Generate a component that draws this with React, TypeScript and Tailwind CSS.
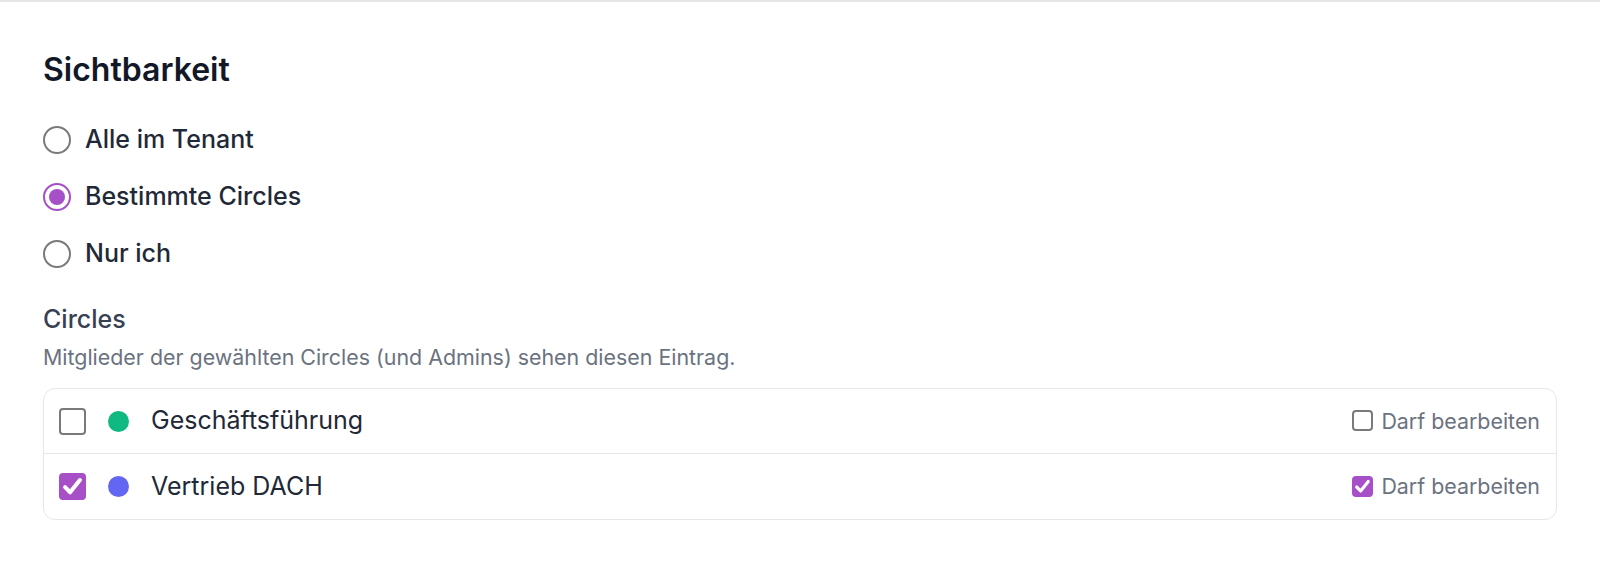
import React, { useState } from "react";

type Visibility = "tenant" | "circles" | "me";

interface Circle {
  id: string;
  name: string;
  color: string;
}

const CIRCLES: Circle[] = [
  { id: "gf", name: "Geschäftsführung", color: "bg-[#10b981]" },
  { id: "vd", name: "Vertrieb DACH", color: "bg-[#6366f1]" },
];

const OPTIONS: { value: Visibility; label: string }[] = [
  { value: "tenant", label: "Alle im Tenant" },
  { value: "circles", label: "Bestimmte Circles" },
  { value: "me", label: "Nur ich" },
];

function Radio({ checked }: { checked: boolean }) {
  return (
    <span
      className={`flex h-[28px] w-[28px] shrink-0 items-center justify-center rounded-full border-[2px] ${
        checked ? "border-[#a64fc6]" : "border-[#7a7a7a]"
      }`}
    >
      {checked && <span className="h-[16px] w-[16px] rounded-full bg-[#a64fc6]" />}
    </span>
  );
}

function Check({ checked, size }: { checked: boolean; size: "lg" | "sm" }) {
  const box = size === "lg" ? "h-[27px] w-[27px] rounded-[4px]" : "h-[21px] w-[21px] rounded-[4px]";
  return (
    <span
      className={`flex shrink-0 items-center justify-center ${box} ${
        checked ? "bg-[#a64fc6]" : "border-[2px] border-[#7a7a7a] bg-white"
      }`}
    >
      {checked && (
        <svg viewBox="0 0 16 16" className="h-full w-full" fill="none">
          <path
            d="M3.6 8.4 L6.6 11.4 L12.4 4.2"
            stroke="white"
            strokeWidth="2.4"
            strokeLinecap="round"
            strokeLinejoin="round"
          />
        </svg>
      )}
    </span>
  );
}

export default function App() {
  const [visibility, setVisibility] = useState<Visibility>("circles");
  const [selected, setSelected] = useState<Record<string, boolean>>({ gf: false, vd: true });
  const [editable, setEditable] = useState<Record<string, boolean>>({ gf: false, vd: true });

  return (
    <div className="min-h-screen bg-white border-t-2 border-[#e5e5e5] px-[43px] pt-[48px] font-['Inter',sans-serif]">
      <h2 className="text-[32px] font-semibold leading-[40px] text-[#111827]">Sichtbarkeit</h2>

      {/* Visibility options */}
      <div className="mt-[30px] flex flex-col gap-[17px]">
        {OPTIONS.map((opt) => (
          <label
            key={opt.value}
            onClick={() => setVisibility(opt.value)}
            className="flex h-[40px] cursor-pointer items-center gap-[14px]"
          >
            <Radio checked={visibility === opt.value} />
            <span className="text-[25px] font-medium text-[#1f2937]">{opt.label}</span>
          </label>
        ))}
      </div>

      {/* Circle picker */}
      <div className="mt-[30px]">
        <div className="text-[25px] font-medium leading-[30px] text-[#374151]">Circles</div>
        <p className="mt-[10px] text-[21.4px] leading-[27px] text-[#6b7280]">
          Mitglieder der gewählten Circles (und Admins) sehen diesen Eintrag.
        </p>

        <div className="mt-[17px] rounded-[12px] border border-[#e5e7eb] divide-y divide-[#e5e7eb]">
          {CIRCLES.map((c) => (
            <div key={c.id} className="flex h-[65px] items-center pl-[15px] pr-[16px]">
              <button
                type="button"
                onClick={() => setSelected((s) => ({ ...s, [c.id]: !s[c.id] }))}
                className="flex items-center"
              >
                <Check checked={selected[c.id]} size="lg" />
              </button>
              <span className={`ml-[22px] h-[21px] w-[21px] rounded-full ${c.color}`} />
              <span className="ml-[22px] text-[25px] text-[#1f2937]">{c.name}</span>
              <button
                type="button"
                onClick={() => setEditable((s) => ({ ...s, [c.id]: !s[c.id] }))}
                className="ml-auto flex items-center gap-[8px]"
              >
                <Check checked={editable[c.id]} size="sm" />
                <span className="text-[21.4px] text-[#6b7280]">Darf bearbeiten</span>
              </button>
            </div>
          ))}
        </div>
      </div>
    </div>
  );
}
